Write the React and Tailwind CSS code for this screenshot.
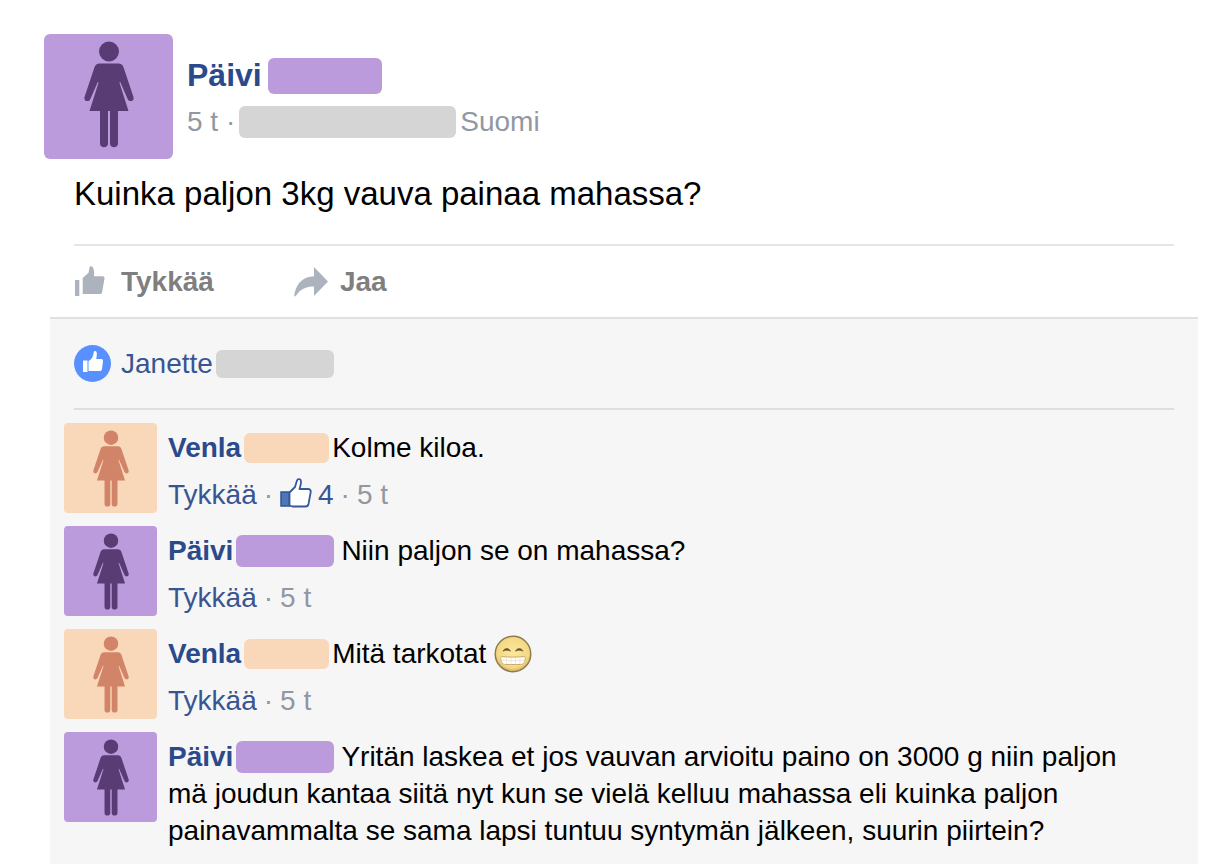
import React from 'react';

const people = {
    paivi: {
        name: 'Päivi',
        figure: 'text-[#5a3c74]',
        box: 'bg-[#bb9bdb]',
        mask: 'bg-[#bb9bdb] w-[98px] h-8 ml-[3px] mr-[7px]',
    },
    venla: {
        name: 'Venla',
        figure: 'text-[#d18468]',
        box: 'bg-[#f9d7b9]',
        mask: 'bg-[#f9d7b9] w-[85px] h-[30px] ml-[3px] mr-[3px]',
    },
};

const comments = [
    { id: 1, who: people.venla, text: 'Kolme kiloa.', likes: 4, time: '5 t' },
    { id: 2, who: people.paivi, text: 'Niin paljon se on mahassa?', time: '5 t' },
    { id: 3, who: people.venla, text: 'Mitä tarkotat', grin: true, time: '5 t' },
    {
        id: 4,
        who: people.paivi,
        text: 'Yritän laskea et jos vauvan arvioitu paino on 3000 g niin paljon mä joudun kantaa siitä nyt kun se vielä kelluu mahassa eli kuinka paljon painavammalta se sama lapsi tuntuu syntymän jälkeen, suurin piirtein?',
    },
];

const Woman = ({ className }) => (
    <svg viewBox="0 0 50 108" fill="currentColor" className={className} aria-hidden="true">
        <circle cx="25" cy="10.5" r="10" />
        <path d="M15.500 22.500h19c2.600 0 4 1.200 5 3.700l9.900 29.500c1.400 4.600-4 6-5.800 2.200L36.200 41l-.8.400L44.500 70H34v32.500c0 5-8 5-8 0V70h-2v32.500c0 5-8 5-8 0V70H5.500l9.100-28.600-.8-.4L6.400 57.900C4.600 61.700-.8 60.300.6 55.700l9.900-29.500c1-2.500 2.400-3.700 5-3.700z" />
    </svg>
);

const ThumbSolid = ({ className }) => (
    <svg viewBox="0 0 32 32" fill="currentColor" className={className} aria-hidden="true">
        <path d="M1 14.500h4.500V31H1z" />
        <path d="M9 12.500L15 7l1-5.500c.3-1.800 2.700-1.500 3.500 0C21 4.500 21 7 20.500 10.500h9c1.500 0 2.200 1 2 2.500L29 27c-.4 1.500-1.200 2-2.500 2H9z" />
    </svg>
);

const ThumbWhite = () => (
    <svg viewBox="0 0 20 21" fill="currentColor" className="mb-1 h-[21px] w-5 text-white" aria-hidden="true">
        <path d="M0 9.500h4.500V21H0z" />
        <path d="M5.500 10c3-1.500 4.500-4 5-7.500.3-2 .6-2.500 1.500-2.500 2 0 2.300 3 1.200 8H18c1.500 0 2.200 1 2 2.200L19 18c-.4 1.500-1 2-2.500 2h-11z" />
    </svg>
);

const ThumbOutline = ({ className }) => (
    <svg viewBox="0 0 32 30" className={className} aria-hidden="true">
        <path d="M1 14h8.500v14H1z" fill="#4f77b8" stroke="#2f5496" strokeWidth="1.500" />
        <path
            d="M9.500 14.500L15 9l2-6.500c.6-2 3.800-1.700 4 .7.200 2.500-.6 5-1.500 7.800h8.500c2 0 3 1.200 2.700 3L28.500 26c-.4 1.700-1.300 2.500-3 2.500h-13l-3-1z"
            fill="#fff"
            stroke="#34589b"
            strokeWidth="1.800"
            strokeLinejoin="round"
        />
    </svg>
);

const ShareArrow = ({ className }) => (
    <svg viewBox="0 0 34 30" fill="currentColor" className={className} aria-hidden="true">
        <path d="M20 0l14 14.500L20 29v-9.500C12 19.500 6 22 1.500 29.500.4 29.500 0 28.500.5 26.500 3 15.500 9.500 9.700 20 9.300z" />
    </svg>
);

const Grin = () => (
    <svg viewBox="0 0 38 38" className="-mt-2 -mb-1 ml-2 inline-block size-[38px] align-middle" role="img" aria-label="😁">
        <defs>
            <radialGradient id="face" cx="50%" cy="45%" r="55%">
                <stop offset="0" stopColor="#fbe79c" />
                <stop offset="0.800" stopColor="#f4d984" />
                <stop offset="1" stopColor="#cfa85c" />
            </radialGradient>
        </defs>
        <circle cx="19" cy="19" r="17.800" fill="url(#face)" stroke="#8f7a50" strokeWidth="1.400" />
        <path d="M9 16.200c1.500-3.600 6-3.600 7.500 0-2.500-1.400-5-1.400-7.500 0zM21.500 16.200c1.500-3.600 6-3.600 7.500 0-2.500-1.400-5-1.400-7.500 0z" fill="#6b4e2c" stroke="#6b4e2c" strokeWidth="0.600" />
        <path d="M8 21.500c7 .8 15 .8 22 0 1.200 0 1.400.8 1.300 2-.3 4-1.800 6-4.800 6h-15c-3 0-4.500-2-4.800-6-.1-1.200.1-2 1.300-2z" fill="#fffdf5" stroke="#c9ab70" strokeWidth="1" />
        <path d="M8 25.500h22M12.500 22.500v6.500M17 23v6.500M21.500 23v6.500M26 22.500v6.500" stroke="#e5dfd0" strokeWidth="0.700" />
    </svg>
);

const Comment = ({ who, text, likes, grin, time }) => (
    <li className="flex items-start gap-[11px]">
        <div className={`flex h-[90px] w-[93px] shrink-0 justify-center rounded pt-[7px] ${who.box}`}>
            <Woman className={`h-[78px] w-9 ${who.figure}`} />
        </div>
        <div className="min-w-0 flex-1 pt-[6px]">
            <p className="text-black">
                <a href="#" className="font-bold text-[#2b4a8b]">{who.name}</a>
                <span className={`-mt-2 -mb-1 inline-block rounded-md align-middle ${who.mask}`} />
                {text}
                {grin && <Grin />}
            </p>
            {time && (
                <div className="mt-[10px] flex items-center gap-[7px] text-[#9197a3]">
                    <button type="button" className="text-[#385592]">Tykkää</button>
                    <span>·</span>
                    {likes && (
                        <>
                            <a href="#" className="flex items-center gap-[6px] text-[#385592]">
                                <ThumbOutline className="mb-1 h-[30px] w-8" />
                                {likes}
                            </a>
                            <span>·</span>
                        </>
                    )}
                    <span>{time}</span>
                </div>
            )}
        </div>
    </li>
);

const App = () => (
    <main className="flex min-h-screen flex-col bg-white pt-[34px] pr-2 font-['Liberation_Sans',Arial,sans-serif] text-[28px] leading-[37px]">
        <header className="ml-11 flex gap-[14px]">
            <div className="flex h-[125px] w-[129px] shrink-0 justify-center rounded-md bg-[#bb9bdb] pt-[7px]">
                <Woman className="h-[108px] w-[50px] text-[#5a3c74]" />
            </div>
            <div className="pt-[23px]">
                <div className="flex items-center gap-[6px]">
                    <a href="#" className="text-[32px] font-bold text-[#2b4a8b]">Päivi</a>
                    <span className="h-9 w-[114px] rounded-md bg-[#bb9bdb]" />
                </div>
                <div className="mt-[9px] flex items-center gap-1 text-[#9197a3]">
                    <span>5 t ·</span>
                    <span className="h-8 w-[217px] rounded-md bg-[#d5d5d5]" />
                    <span>Suomi</span>
                </div>
            </div>
        </header>

        <p className="mt-4 ml-[74px] text-[33px] text-black">Kuinka paljon 3kg vauva painaa mahassa?</p>

        <div className="mt-8 mr-6 ml-[74px] flex gap-20 border-t-2 border-[#e5e5e5] pt-[17px] pb-[17px] font-bold text-[#7f7f7f]">
            <button type="button" className="flex items-center gap-4">
                <ThumbSolid className="size-[31px] text-[#adb3bd]" />
                Tykkää
            </button>
            <button type="button" className="flex items-center gap-3">
                <ShareArrow className="h-[30px] w-[34px] text-[#adb3bd]" />
                Jaa
            </button>
        </div>

        <section className="ml-[50px] flex-1 border-t-2 border-[#e1e1e2] bg-[#f6f6f6] pb-[15px]">
            <div className="mx-6 flex items-center border-b-2 border-[#dedede] pt-[26px] pb-[26px]">
                <span className="mr-[10px] flex size-[37px] items-center justify-center rounded-full bg-[#5890ff]">
                    <ThumbWhite />
                </span>
                <a href="#" className="text-[#385592]">Janette</a>
                <span className="ml-[3px] h-7 w-[118px] rounded-md bg-[#d5d5d5]" />
            </div>
            <ul className="mt-[13px] mr-11 ml-[14px] flex flex-col gap-[13px]">
                {comments.map((c) => (
                    <Comment key={c.id} {...c} />
                ))}
            </ul>
        </section>
    </main>
);

export default App;
